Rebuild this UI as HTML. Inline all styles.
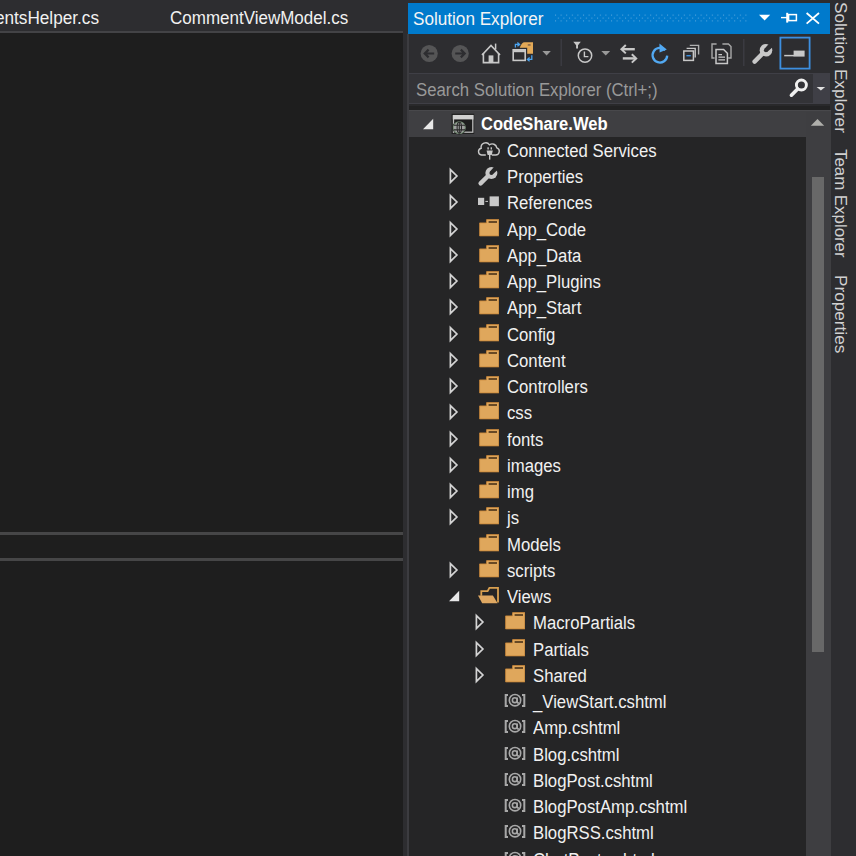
<!DOCTYPE html>
<html><head><meta charset="utf-8">
<style>
*{margin:0;padding:0;box-sizing:border-box}
html,body{width:856px;height:856px;overflow:hidden;background:#2d2d30;font-family:"Liberation Sans",sans-serif;color:#f1f1f1}
.abs{position:absolute}
#tabs{left:0;top:0;width:403px;height:31px;background:#2d2d30}
.tab{position:absolute;top:3.3px;height:31px;line-height:31px;font-size:18px;color:#f1f1f1;white-space:nowrap;transform:scaleX(0.955)}
#tabline{left:0;top:31px;width:403px;height:2px;background:#434346}
#editor{left:0;top:33px;width:403px;height:823px;background:#1e1e1e}
.hl{position:absolute;left:0;width:403px;height:3px;background:#464647}
#splitline{left:407px;top:34px;width:2px;height:822px;background:#3c3c40;z-index:5}
#se{left:408px;top:3px;width:423px;height:853px;overflow:hidden}
#title{left:0;top:0;width:422px;height:31px;background:#007acc}
#title .t{position:absolute;left:4.8px;top:1px;line-height:31px;font-size:18px;color:#f4f4f4;white-space:nowrap;transform:scaleX(0.952);transform-origin:0 50%}
#toolbar{left:0;top:31px;width:422px;height:39px;background:#2d2d30}
#search{left:0;top:70px;width:422px;height:30.5px;background:#333337;border-top:1px solid #3f3f46;border-bottom:1px solid #3f3f46}
#search .ph{position:absolute;left:7.6px;top:2.2px;line-height:29px;font-size:17.6px;color:#999999;white-space:nowrap;transform:scaleX(0.952);transform-origin:0 50%}
#sdrop{position:absolute;left:405px;top:-1px;width:17px;height:30.5px;background:#3f3f46}
#band{left:0;top:100.5px;width:422px;height:6.5px;background:#222223;border-top:2px solid #29292b}
#tree{left:0;top:107px;width:398px;height:749px;background:#252526}
.row{position:absolute;left:0;width:398px;height:26.25px}
.selbg{position:absolute;left:0;top:0;width:423px;height:26.75px;background:#3f3f42;border-top:1px solid #48484b}
.ar,.ic{position:absolute;top:0;height:26px}
.ar svg,.ic svg{display:block}
.tx{position:absolute;top:1px;line-height:26.25px;font-size:17.6px;white-space:nowrap;color:#f1f1f1;transform:scaleX(0.95);transform-origin:0 50%}
.tx.b{font-weight:bold;color:#ffffff;transform:scaleX(0.94);top:0}
#sbar{left:398px;top:108.5px;width:25px;height:749px;background:#3e3e41}
#thumb{left:404px;top:174px;width:12px;height:474.6px;background:#686868}
#side{left:831px;top:0;width:25px;height:856px;background:#2d2d30}
.vt{position:absolute;left:3px;white-space:nowrap;font-size:17.2px;line-height:20px;color:#d0d0d0;transform-origin:0 0;transform:rotate(90deg)}
</style></head><body>
<div id="tabs" class="abs">
  <div class="tab" style="right:304px;transform-origin:100% 50%">CommentsHelper.cs</div>
  <div class="tab" style="left:170px;transform-origin:0 50%;transform:scaleX(0.944)">CommentViewModel.cs</div>
</div>
<div id="tabline" class="abs"></div>
<div id="editor" class="abs">
  <div class="hl" style="top:499px"></div>
  <div class="hl" style="top:525px"></div>
</div>
<div id="splitline" class="abs"></div>
<div id="se" class="abs">
  <div id="title" class="abs"><div class="t">Solution Explorer</div>
  </div>
  <div id="toolbar" class="abs"></div>
  <div id="search" class="abs"><div class="ph">Search Solution Explorer (Ctrl+;)</div><div id="sdrop"></div></div>
  <div id="band" class="abs"></div>
  <div id="tree" class="abs"><div class="selbg"></div>
  <div class="row" style="top:0.50px"><div class="ar" style="left:13.5px"><svg width="12" height="26" viewBox="0 0 12 26"><polygon points="11.2,7.8 11.2,18.2 1,18.2" fill="#e8e8e8"/></svg></div><div class="ic" style="left:43.0px"><svg width="24" height="26" viewBox="0 0 24 26"><rect x="0.6" y="2.7" width="22.6" height="20.2" fill="#1e1e1e"/><rect x="2.5" y="4.6" width="19.3" height="16.6" fill="none" stroke="#bdbdbd" stroke-width="1.3"/><rect x="1.8" y="4" width="20.6" height="4.4" fill="#d0d0d0"/><circle cx="8.3" cy="16.6" r="7" fill="#1e1e1e"/><circle cx="8.3" cy="16.6" r="5.9" fill="#a0a0a0" stroke="#7a927a" stroke-width="1.1"/><ellipse cx="8.3" cy="16.6" rx="2.2" ry="5.6" fill="none" stroke="#2a2a2a" stroke-width="1.1"/><path d="M2.6,14.3 H14 M2.6,18.9 H14 M8.3,11 V22.2" stroke="#2a2a2a" stroke-width="1.1"/></svg></div><div class="tx b" style="left:73.2px">CodeShare.Web</div></div><div class="row" style="top:26.75px"><div class="ic" style="left:69.0px"><svg width="24" height="26" viewBox="0 0 24 26"><path d="M8.8,18 H4.5 A3.4,3.4 0 0 1 4.2,11.3 A4.6,4.6 0 0 1 12.5,7.8 A4.6,4.6 0 0 1 19.8,10.8 A3.7,3.7 0 0 1 18.6,18 H14.8" fill="none" stroke="#c8c8c8" stroke-width="1.4"/><rect x="10.4" y="10.3" width="1.4" height="2.2" fill="#c8c8c8"/><rect x="13.6" y="10.3" width="1.4" height="2.2" fill="#c8c8c8"/><path d="M9.6,13.6 H15.8 L14.8,18 H10.6 Z" fill="#c8c8c8"/><rect x="12" y="18" width="1.4" height="4.6" fill="#c8c8c8"/></svg></div><div class="tx" style="left:99.2px">Connected Services</div></div><div class="row" style="top:53.00px"><div class="ar" style="left:39.5px"><svg width="12" height="26" viewBox="0 0 12 26"><polygon points="2.4,6.6 8.9,13 2.4,19.4" fill="none" stroke="#d4d4d4" stroke-width="1.7" stroke-linejoin="miter"/></svg></div><div class="ic" style="left:69.0px"><svg width="22" height="26" viewBox="0 0 22 26"><path d="M3.6,20.4 L11,13" stroke="#c8c8c8" stroke-width="4.4" stroke-linecap="round"/><circle cx="14.4" cy="9.9" r="6" fill="#c8c8c8"/><polygon points="13,8.5 15.8,11.3 22.6,5.2 19.2,1.4" fill="#252526"/><circle cx="14.4" cy="9.9" r="2" fill="#252526"/></svg></div><div class="tx" style="left:99.2px">Properties</div></div><div class="row" style="top:79.25px"><div class="ar" style="left:39.5px"><svg width="12" height="26" viewBox="0 0 12 26"><polygon points="2.4,6.6 8.9,13 2.4,19.4" fill="none" stroke="#d4d4d4" stroke-width="1.7" stroke-linejoin="miter"/></svg></div><div class="ic" style="left:69.0px"><svg width="22" height="26" viewBox="0 0 22 26"><rect x="1" y="8.8" width="6.2" height="7.2" fill="#c8c8c8"/><rect x="8.4" y="11.9" width="2.6" height="1" fill="#c8c8c8"/><rect x="12.6" y="7.4" width="9.3" height="9.8" fill="#c8c8c8"/></svg></div><div class="tx" style="left:99.2px">References</div></div><div class="row" style="top:105.50px"><div class="ar" style="left:39.5px"><svg width="12" height="26" viewBox="0 0 12 26"><polygon points="2.4,6.6 8.9,13 2.4,19.4" fill="none" stroke="#d4d4d4" stroke-width="1.7" stroke-linejoin="miter"/></svg></div><div class="ic" style="left:69.0px"><svg width="22" height="26" viewBox="0 0 22 26"><path d="M2.6,6.9 H9.4 L9.6,3.6 H21.9 V19.9 H2.6 Z" fill="#dfa75c" stroke="#c98738" stroke-width="0.8" stroke-linejoin="round"/><rect x="11.6" y="5.1" width="8.4" height="1.8" fill="#5a4020"/></svg></div><div class="tx" style="left:99.2px">App_Code</div></div><div class="row" style="top:131.75px"><div class="ar" style="left:39.5px"><svg width="12" height="26" viewBox="0 0 12 26"><polygon points="2.4,6.6 8.9,13 2.4,19.4" fill="none" stroke="#d4d4d4" stroke-width="1.7" stroke-linejoin="miter"/></svg></div><div class="ic" style="left:69.0px"><svg width="22" height="26" viewBox="0 0 22 26"><path d="M2.6,6.9 H9.4 L9.6,3.6 H21.9 V19.9 H2.6 Z" fill="#dfa75c" stroke="#c98738" stroke-width="0.8" stroke-linejoin="round"/><rect x="11.6" y="5.1" width="8.4" height="1.8" fill="#5a4020"/></svg></div><div class="tx" style="left:99.2px">App_Data</div></div><div class="row" style="top:158.00px"><div class="ar" style="left:39.5px"><svg width="12" height="26" viewBox="0 0 12 26"><polygon points="2.4,6.6 8.9,13 2.4,19.4" fill="none" stroke="#d4d4d4" stroke-width="1.7" stroke-linejoin="miter"/></svg></div><div class="ic" style="left:69.0px"><svg width="22" height="26" viewBox="0 0 22 26"><path d="M2.6,6.9 H9.4 L9.6,3.6 H21.9 V19.9 H2.6 Z" fill="#dfa75c" stroke="#c98738" stroke-width="0.8" stroke-linejoin="round"/><rect x="11.6" y="5.1" width="8.4" height="1.8" fill="#5a4020"/></svg></div><div class="tx" style="left:99.2px">App_Plugins</div></div><div class="row" style="top:184.25px"><div class="ar" style="left:39.5px"><svg width="12" height="26" viewBox="0 0 12 26"><polygon points="2.4,6.6 8.9,13 2.4,19.4" fill="none" stroke="#d4d4d4" stroke-width="1.7" stroke-linejoin="miter"/></svg></div><div class="ic" style="left:69.0px"><svg width="22" height="26" viewBox="0 0 22 26"><path d="M2.6,6.9 H9.4 L9.6,3.6 H21.9 V19.9 H2.6 Z" fill="#dfa75c" stroke="#c98738" stroke-width="0.8" stroke-linejoin="round"/><rect x="11.6" y="5.1" width="8.4" height="1.8" fill="#5a4020"/></svg></div><div class="tx" style="left:99.2px">App_Start</div></div><div class="row" style="top:210.50px"><div class="ar" style="left:39.5px"><svg width="12" height="26" viewBox="0 0 12 26"><polygon points="2.4,6.6 8.9,13 2.4,19.4" fill="none" stroke="#d4d4d4" stroke-width="1.7" stroke-linejoin="miter"/></svg></div><div class="ic" style="left:69.0px"><svg width="22" height="26" viewBox="0 0 22 26"><path d="M2.6,6.9 H9.4 L9.6,3.6 H21.9 V19.9 H2.6 Z" fill="#dfa75c" stroke="#c98738" stroke-width="0.8" stroke-linejoin="round"/><rect x="11.6" y="5.1" width="8.4" height="1.8" fill="#5a4020"/></svg></div><div class="tx" style="left:99.2px">Config</div></div><div class="row" style="top:236.75px"><div class="ar" style="left:39.5px"><svg width="12" height="26" viewBox="0 0 12 26"><polygon points="2.4,6.6 8.9,13 2.4,19.4" fill="none" stroke="#d4d4d4" stroke-width="1.7" stroke-linejoin="miter"/></svg></div><div class="ic" style="left:69.0px"><svg width="22" height="26" viewBox="0 0 22 26"><path d="M2.6,6.9 H9.4 L9.6,3.6 H21.9 V19.9 H2.6 Z" fill="#dfa75c" stroke="#c98738" stroke-width="0.8" stroke-linejoin="round"/><rect x="11.6" y="5.1" width="8.4" height="1.8" fill="#5a4020"/></svg></div><div class="tx" style="left:99.2px">Content</div></div><div class="row" style="top:263.00px"><div class="ar" style="left:39.5px"><svg width="12" height="26" viewBox="0 0 12 26"><polygon points="2.4,6.6 8.9,13 2.4,19.4" fill="none" stroke="#d4d4d4" stroke-width="1.7" stroke-linejoin="miter"/></svg></div><div class="ic" style="left:69.0px"><svg width="22" height="26" viewBox="0 0 22 26"><path d="M2.6,6.9 H9.4 L9.6,3.6 H21.9 V19.9 H2.6 Z" fill="#dfa75c" stroke="#c98738" stroke-width="0.8" stroke-linejoin="round"/><rect x="11.6" y="5.1" width="8.4" height="1.8" fill="#5a4020"/></svg></div><div class="tx" style="left:99.2px">Controllers</div></div><div class="row" style="top:289.25px"><div class="ar" style="left:39.5px"><svg width="12" height="26" viewBox="0 0 12 26"><polygon points="2.4,6.6 8.9,13 2.4,19.4" fill="none" stroke="#d4d4d4" stroke-width="1.7" stroke-linejoin="miter"/></svg></div><div class="ic" style="left:69.0px"><svg width="22" height="26" viewBox="0 0 22 26"><path d="M2.6,6.9 H9.4 L9.6,3.6 H21.9 V19.9 H2.6 Z" fill="#dfa75c" stroke="#c98738" stroke-width="0.8" stroke-linejoin="round"/><rect x="11.6" y="5.1" width="8.4" height="1.8" fill="#5a4020"/></svg></div><div class="tx" style="left:99.2px">css</div></div><div class="row" style="top:315.50px"><div class="ar" style="left:39.5px"><svg width="12" height="26" viewBox="0 0 12 26"><polygon points="2.4,6.6 8.9,13 2.4,19.4" fill="none" stroke="#d4d4d4" stroke-width="1.7" stroke-linejoin="miter"/></svg></div><div class="ic" style="left:69.0px"><svg width="22" height="26" viewBox="0 0 22 26"><path d="M2.6,6.9 H9.4 L9.6,3.6 H21.9 V19.9 H2.6 Z" fill="#dfa75c" stroke="#c98738" stroke-width="0.8" stroke-linejoin="round"/><rect x="11.6" y="5.1" width="8.4" height="1.8" fill="#5a4020"/></svg></div><div class="tx" style="left:99.2px">fonts</div></div><div class="row" style="top:341.75px"><div class="ar" style="left:39.5px"><svg width="12" height="26" viewBox="0 0 12 26"><polygon points="2.4,6.6 8.9,13 2.4,19.4" fill="none" stroke="#d4d4d4" stroke-width="1.7" stroke-linejoin="miter"/></svg></div><div class="ic" style="left:69.0px"><svg width="22" height="26" viewBox="0 0 22 26"><path d="M2.6,6.9 H9.4 L9.6,3.6 H21.9 V19.9 H2.6 Z" fill="#dfa75c" stroke="#c98738" stroke-width="0.8" stroke-linejoin="round"/><rect x="11.6" y="5.1" width="8.4" height="1.8" fill="#5a4020"/></svg></div><div class="tx" style="left:99.2px">images</div></div><div class="row" style="top:368.00px"><div class="ar" style="left:39.5px"><svg width="12" height="26" viewBox="0 0 12 26"><polygon points="2.4,6.6 8.9,13 2.4,19.4" fill="none" stroke="#d4d4d4" stroke-width="1.7" stroke-linejoin="miter"/></svg></div><div class="ic" style="left:69.0px"><svg width="22" height="26" viewBox="0 0 22 26"><path d="M2.6,6.9 H9.4 L9.6,3.6 H21.9 V19.9 H2.6 Z" fill="#dfa75c" stroke="#c98738" stroke-width="0.8" stroke-linejoin="round"/><rect x="11.6" y="5.1" width="8.4" height="1.8" fill="#5a4020"/></svg></div><div class="tx" style="left:99.2px">img</div></div><div class="row" style="top:394.25px"><div class="ar" style="left:39.5px"><svg width="12" height="26" viewBox="0 0 12 26"><polygon points="2.4,6.6 8.9,13 2.4,19.4" fill="none" stroke="#d4d4d4" stroke-width="1.7" stroke-linejoin="miter"/></svg></div><div class="ic" style="left:69.0px"><svg width="22" height="26" viewBox="0 0 22 26"><path d="M2.6,6.9 H9.4 L9.6,3.6 H21.9 V19.9 H2.6 Z" fill="#dfa75c" stroke="#c98738" stroke-width="0.8" stroke-linejoin="round"/><rect x="11.6" y="5.1" width="8.4" height="1.8" fill="#5a4020"/></svg></div><div class="tx" style="left:99.2px">js</div></div><div class="row" style="top:420.50px"><div class="ic" style="left:69.0px"><svg width="22" height="26" viewBox="0 0 22 26"><path d="M2.6,6.9 H9.4 L9.6,3.6 H21.9 V19.9 H2.6 Z" fill="#dfa75c" stroke="#c98738" stroke-width="0.8" stroke-linejoin="round"/><rect x="11.6" y="5.1" width="8.4" height="1.8" fill="#5a4020"/></svg></div><div class="tx" style="left:99.2px">Models</div></div><div class="row" style="top:446.75px"><div class="ar" style="left:39.5px"><svg width="12" height="26" viewBox="0 0 12 26"><polygon points="2.4,6.6 8.9,13 2.4,19.4" fill="none" stroke="#d4d4d4" stroke-width="1.7" stroke-linejoin="miter"/></svg></div><div class="ic" style="left:69.0px"><svg width="22" height="26" viewBox="0 0 22 26"><path d="M2.6,6.9 H9.4 L9.6,3.6 H21.9 V19.9 H2.6 Z" fill="#dfa75c" stroke="#c98738" stroke-width="0.8" stroke-linejoin="round"/><rect x="11.6" y="5.1" width="8.4" height="1.8" fill="#5a4020"/></svg></div><div class="tx" style="left:99.2px">scripts</div></div><div class="row" style="top:473.00px"><div class="ar" style="left:39.5px"><svg width="12" height="26" viewBox="0 0 12 26"><polygon points="11.2,7.8 11.2,18.2 1,18.2" fill="#e8e8e8"/></svg></div><div class="ic" style="left:69.0px"><svg width="22" height="26" viewBox="0 0 22 26"><path d="M4.3,12.8 V8.2 H10.6 L12.4,4.8 H21 V19.6" fill="none" stroke="#d9a050" stroke-width="1.8"/><path d="M1,12.6 H15.9 L20.6,20.2 H5.2 Z" fill="#dfa862"/></svg></div><div class="tx" style="left:99.2px">Views</div></div><div class="row" style="top:499.25px"><div class="ar" style="left:65.5px"><svg width="12" height="26" viewBox="0 0 12 26"><polygon points="2.4,6.6 8.9,13 2.4,19.4" fill="none" stroke="#d4d4d4" stroke-width="1.7" stroke-linejoin="miter"/></svg></div><div class="ic" style="left:95.0px"><svg width="22" height="26" viewBox="0 0 22 26"><path d="M2.6,6.9 H9.4 L9.6,3.6 H21.9 V19.9 H2.6 Z" fill="#dfa75c" stroke="#c98738" stroke-width="0.8" stroke-linejoin="round"/><rect x="11.6" y="5.1" width="8.4" height="1.8" fill="#5a4020"/></svg></div><div class="tx" style="left:125.2px">MacroPartials</div></div><div class="row" style="top:525.50px"><div class="ar" style="left:65.5px"><svg width="12" height="26" viewBox="0 0 12 26"><polygon points="2.4,6.6 8.9,13 2.4,19.4" fill="none" stroke="#d4d4d4" stroke-width="1.7" stroke-linejoin="miter"/></svg></div><div class="ic" style="left:95.0px"><svg width="22" height="26" viewBox="0 0 22 26"><path d="M2.6,6.9 H9.4 L9.6,3.6 H21.9 V19.9 H2.6 Z" fill="#dfa75c" stroke="#c98738" stroke-width="0.8" stroke-linejoin="round"/><rect x="11.6" y="5.1" width="8.4" height="1.8" fill="#5a4020"/></svg></div><div class="tx" style="left:125.2px">Partials</div></div><div class="row" style="top:551.75px"><div class="ar" style="left:65.5px"><svg width="12" height="26" viewBox="0 0 12 26"><polygon points="2.4,6.6 8.9,13 2.4,19.4" fill="none" stroke="#d4d4d4" stroke-width="1.7" stroke-linejoin="miter"/></svg></div><div class="ic" style="left:95.0px"><svg width="22" height="26" viewBox="0 0 22 26"><path d="M2.6,6.9 H9.4 L9.6,3.6 H21.9 V19.9 H2.6 Z" fill="#dfa75c" stroke="#c98738" stroke-width="0.8" stroke-linejoin="round"/><rect x="11.6" y="5.1" width="8.4" height="1.8" fill="#5a4020"/></svg></div><div class="tx" style="left:125.2px">Shared</div></div><div class="row" style="top:578.00px"><div class="ic" style="left:95.0px"><svg width="24" height="26" viewBox="0 0 24 26"><path d="M5,6.9 H2.7 V18 H5" fill="none" stroke="#a8a8a8" stroke-width="2"/><path d="M19,6.9 H21.3 V18 H19" fill="none" stroke="#a8a8a8" stroke-width="2"/><circle cx="12" cy="12.2" r="5.7" fill="none" stroke="#a8a8a8" stroke-width="1.6"/><circle cx="11.8" cy="12.2" r="2.4" fill="none" stroke="#a8a8a8" stroke-width="1.6"/><path d="M14.2,9.6 V14.2 Q14.4,15.6 16.2,14.8" fill="none" stroke="#a8a8a8" stroke-width="1.5"/></svg></div><div class="tx" style="left:125.2px">_ViewStart.cshtml</div></div><div class="row" style="top:604.25px"><div class="ic" style="left:95.0px"><svg width="24" height="26" viewBox="0 0 24 26"><path d="M5,6.9 H2.7 V18 H5" fill="none" stroke="#a8a8a8" stroke-width="2"/><path d="M19,6.9 H21.3 V18 H19" fill="none" stroke="#a8a8a8" stroke-width="2"/><circle cx="12" cy="12.2" r="5.7" fill="none" stroke="#a8a8a8" stroke-width="1.6"/><circle cx="11.8" cy="12.2" r="2.4" fill="none" stroke="#a8a8a8" stroke-width="1.6"/><path d="M14.2,9.6 V14.2 Q14.4,15.6 16.2,14.8" fill="none" stroke="#a8a8a8" stroke-width="1.5"/></svg></div><div class="tx" style="left:125.2px">Amp.cshtml</div></div><div class="row" style="top:630.50px"><div class="ic" style="left:95.0px"><svg width="24" height="26" viewBox="0 0 24 26"><path d="M5,6.9 H2.7 V18 H5" fill="none" stroke="#a8a8a8" stroke-width="2"/><path d="M19,6.9 H21.3 V18 H19" fill="none" stroke="#a8a8a8" stroke-width="2"/><circle cx="12" cy="12.2" r="5.7" fill="none" stroke="#a8a8a8" stroke-width="1.6"/><circle cx="11.8" cy="12.2" r="2.4" fill="none" stroke="#a8a8a8" stroke-width="1.6"/><path d="M14.2,9.6 V14.2 Q14.4,15.6 16.2,14.8" fill="none" stroke="#a8a8a8" stroke-width="1.5"/></svg></div><div class="tx" style="left:125.2px">Blog.cshtml</div></div><div class="row" style="top:656.75px"><div class="ic" style="left:95.0px"><svg width="24" height="26" viewBox="0 0 24 26"><path d="M5,6.9 H2.7 V18 H5" fill="none" stroke="#a8a8a8" stroke-width="2"/><path d="M19,6.9 H21.3 V18 H19" fill="none" stroke="#a8a8a8" stroke-width="2"/><circle cx="12" cy="12.2" r="5.7" fill="none" stroke="#a8a8a8" stroke-width="1.6"/><circle cx="11.8" cy="12.2" r="2.4" fill="none" stroke="#a8a8a8" stroke-width="1.6"/><path d="M14.2,9.6 V14.2 Q14.4,15.6 16.2,14.8" fill="none" stroke="#a8a8a8" stroke-width="1.5"/></svg></div><div class="tx" style="left:125.2px">BlogPost.cshtml</div></div><div class="row" style="top:683.00px"><div class="ic" style="left:95.0px"><svg width="24" height="26" viewBox="0 0 24 26"><path d="M5,6.9 H2.7 V18 H5" fill="none" stroke="#a8a8a8" stroke-width="2"/><path d="M19,6.9 H21.3 V18 H19" fill="none" stroke="#a8a8a8" stroke-width="2"/><circle cx="12" cy="12.2" r="5.7" fill="none" stroke="#a8a8a8" stroke-width="1.6"/><circle cx="11.8" cy="12.2" r="2.4" fill="none" stroke="#a8a8a8" stroke-width="1.6"/><path d="M14.2,9.6 V14.2 Q14.4,15.6 16.2,14.8" fill="none" stroke="#a8a8a8" stroke-width="1.5"/></svg></div><div class="tx" style="left:125.2px">BlogPostAmp.cshtml</div></div><div class="row" style="top:709.25px"><div class="ic" style="left:95.0px"><svg width="24" height="26" viewBox="0 0 24 26"><path d="M5,6.9 H2.7 V18 H5" fill="none" stroke="#a8a8a8" stroke-width="2"/><path d="M19,6.9 H21.3 V18 H19" fill="none" stroke="#a8a8a8" stroke-width="2"/><circle cx="12" cy="12.2" r="5.7" fill="none" stroke="#a8a8a8" stroke-width="1.6"/><circle cx="11.8" cy="12.2" r="2.4" fill="none" stroke="#a8a8a8" stroke-width="1.6"/><path d="M14.2,9.6 V14.2 Q14.4,15.6 16.2,14.8" fill="none" stroke="#a8a8a8" stroke-width="1.5"/></svg></div><div class="tx" style="left:125.2px">BlogRSS.cshtml</div></div><div class="row" style="top:735.50px"><div class="ic" style="left:95.0px"><svg width="24" height="26" viewBox="0 0 24 26"><path d="M5,6.9 H2.7 V18 H5" fill="none" stroke="#a8a8a8" stroke-width="2"/><path d="M19,6.9 H21.3 V18 H19" fill="none" stroke="#a8a8a8" stroke-width="2"/><circle cx="12" cy="12.2" r="5.7" fill="none" stroke="#a8a8a8" stroke-width="1.6"/><circle cx="11.8" cy="12.2" r="2.4" fill="none" stroke="#a8a8a8" stroke-width="1.6"/><path d="M14.2,9.6 V14.2 Q14.4,15.6 16.2,14.8" fill="none" stroke="#a8a8a8" stroke-width="1.5"/></svg></div><div class="tx" style="left:125.2px">ChatPost.cshtml</div></div>
  </div>
  <div id="sbar" class="abs"></div>
  <div id="thumb" class="abs"></div>
</div>
<svg class="abs" style="left:0;top:0" width="856" height="130" viewBox="0 0 856 130">
<!-- title bar grip -->
<defs><pattern id="grip" x="555" y="14" width="5.6" height="8" patternUnits="userSpaceOnUse">
<rect x="0" y="0.6" width="1" height="1" fill="#ffffff" fill-opacity="0.35"/>
<rect x="2.8" y="3.6" width="1" height="1" fill="#ffffff" fill-opacity="0.35"/>
<rect x="0" y="6.4" width="1" height="1" fill="#ffffff" fill-opacity="0.35"/>
</pattern></defs>
<rect x="555" y="14" width="193" height="8" fill="url(#grip)"/>
<polygon points="759,14.7 770.2,14.7 764.6,20.6" fill="#ffffff"/>
<path d="M781,17.6 H787" stroke="#ffffff" stroke-width="1.4"/>
<path d="M787.2,12.8 V22.6" stroke="#ffffff" stroke-width="2"/>
<rect x="788.6" y="14.6" width="7.8" height="6" fill="none" stroke="#ffffff" stroke-width="1.5"/>
<path d="M806.6,13 L819,23.6 M819,13 L806.6,23.6" stroke="#ffffff" stroke-width="1.8"/>
<!-- back / forward -->
<circle cx="429.2" cy="53.5" r="8.6" fill="#555556"/>
<path d="M425,53.5 H434.2 M428.6,49.6 L424.7,53.5 L428.6,57.4" fill="none" stroke="#2d2d30" stroke-width="2.2"/>
<circle cx="460.2" cy="53.5" r="8.6" fill="#555556"/>
<path d="M455.2,53.5 H464.4 M460.8,49.6 L464.7,53.5 L460.8,57.4" fill="none" stroke="#2d2d30" stroke-width="2.2"/>
<!-- home -->
<path d="M482,55 L491,45.4 L500,55" fill="none" stroke="#c8c8c8" stroke-width="1.7"/>
<path d="M495.6,43.6 V49.4" stroke="#c8c8c8" stroke-width="1.5"/>
<path d="M483.4,53 V62.6 H498.6 V53" fill="none" stroke="#c8c8c8" stroke-width="1.6"/>
<rect x="488.6" y="55.4" width="4.8" height="7.6" fill="#c8c8c8"/>
<!-- sync with active document -->
<path d="M519.8,47.8 Q521.5,42.2 524.6,42.2 H533 V53.8 H527.2 V47.8 Z" fill="#e3a957"/>
<ellipse cx="529.2" cy="44.9" rx="1.7" ry="0.9" fill="#8a6a4a"/>
<rect x="513.2" y="49.8" width="12" height="10.6" fill="#2d2d30" stroke="#c8c8c8" stroke-width="1.6"/>
<rect x="513.2" y="49.8" width="12" height="2.4" fill="#c8c8c8"/>
<path d="M515.4,47.4 V44.4 H518.6 M517.4,42.6 L519.6,44.4 L517.4,46.2" fill="none" stroke="#4aa3ef" stroke-width="1.3"/>
<path d="M531.8,55.2 V59.4 H528.2 M529.6,57.4 L527.4,59.4 L529.6,61.2" fill="none" stroke="#4aa3ef" stroke-width="1.3"/>
<polygon points="542.4,51 550.8,51 546.6,55.4" fill="#999999"/>
<!-- separator -->
<rect x="560.6" y="39" width="1.2" height="27" fill="#3f3f46"/>
<!-- pending changes filter -->
<polygon points="573.3,41.8 580.8,41.8 578,45.2 578,48.4 576.1,48.4 576.1,45.2" fill="#c8c8c8"/>
<circle cx="585" cy="55.6" r="6.7" fill="none" stroke="#c8c8c8" stroke-width="1.5"/>
<path d="M584.4,51.6 V56.6 H588.4" fill="none" stroke="#c8c8c8" stroke-width="1.4"/>
<polygon points="601.3,51 610.2,51 605.75,55.6" fill="#999999"/>
<!-- sync arrows -->
<path d="M622.4,49.2 H634.8" stroke="#c8c8c8" stroke-width="2.4"/>
<path d="M625.8,45 L621.4,49.2 L625.8,53.4" fill="none" stroke="#c8c8c8" stroke-width="2"/>
<path d="M622.8,58.4 H635" stroke="#c8c8c8" stroke-width="2.4"/>
<path d="M631.8,54.2 L636.2,58.4 L631.8,62.6" fill="none" stroke="#c8c8c8" stroke-width="2"/>
<!-- refresh -->
<path d="M665.2,50.2 A7.3,7.3 0 1 0 667.2,55.6" fill="none" stroke="#52a9f2" stroke-width="2.3"/>
<polygon points="659.4,43.4 666.8,49.6 659.6,52.6" fill="#52a9f2"/>
<!-- collapse all -->
<path d="M689.8,45.4 H698.6 V54.4" fill="none" stroke="#b0b0b0" stroke-width="1.4"/>
<path d="M686.6,48.4 H695.2 V57.4" fill="none" stroke="#c8c8c8" stroke-width="1.4"/>
<rect x="683.8" y="51" width="9.6" height="9.4" fill="#2d2d30" stroke="#c8c8c8" stroke-width="1.5"/>
<rect x="686.4" y="55" width="4.4" height="1.4" fill="#3b8fe0"/>
<!-- show all files -->
<path d="M714.6,58 H712 V44 H716.6" fill="none" stroke="#a8a8a8" stroke-width="1.4"/>
<path d="M722.4,44 H728.4 L731,46.6 V58 H728.2" fill="none" stroke="#a8a8a8" stroke-width="1.4"/>
<path d="M716,49.4 H723.6 L727.4,53.2 V63.4 H716 Z" fill="#2d2d30" stroke="#c8c8c8" stroke-width="1.5"/>
<path d="M718.4,54.6 H722 M718.4,57.2 H725 M718.4,59.8 H725" stroke="#c8c8c8" stroke-width="1.2"/>
<!-- separator -->
<rect x="743.2" y="39" width="1.2" height="27" fill="#3f3f46"/>
<!-- wrench -->
<path d="M754.6,61.6 L762.8,53.4" stroke="#c8c8c8" stroke-width="4.4" stroke-linecap="round"/>
<circle cx="766" cy="50.2" r="6.3" fill="#c8c8c8"/>
<polygon points="764.5,48.8 767.4,51.7 774.6,45.4 771,41.4" fill="#2d2d30"/>
<circle cx="765.95" cy="50.25" r="2.05" fill="#2d2d30"/>
<!-- preview selected (active) -->
<rect x="780.4" y="37.6" width="29.2" height="31" fill="#2d2d30" stroke="#3d8fe0" stroke-width="1.8"/>
<path d="M784.2,55.6 H794" stroke="#c8c8c8" stroke-width="1.5"/>
<rect x="793.6" y="50.6" width="11" height="6" fill="#c8c8c8"/>
<!-- search glass -->
<circle cx="801.4" cy="85" r="5" fill="none" stroke="#f0f0f0" stroke-width="2.9"/>
<path d="M797.6,89 L791.4,95.2" stroke="#f0f0f0" stroke-width="3.6" stroke-linecap="round"/>
<polygon points="816.6,87 825.2,87 820.9,90.6" fill="#e0e0e0"/>
<!-- scroll up arrow -->
<polygon points="817.5,119 824.2,125.8 810.8,125.8" fill="#b0b0ac"/>
</svg>
<div id="side" class="abs">
  <div class="vt" style="top:2px;left:20px">Solution Explorer</div>
  <div class="vt" style="top:149px;left:20px;transform:rotate(90deg) scaleX(0.98)">Team Explorer</div>
  <div class="vt" style="top:274.5px;left:20px">Properties</div>
</div>
</body></html>
